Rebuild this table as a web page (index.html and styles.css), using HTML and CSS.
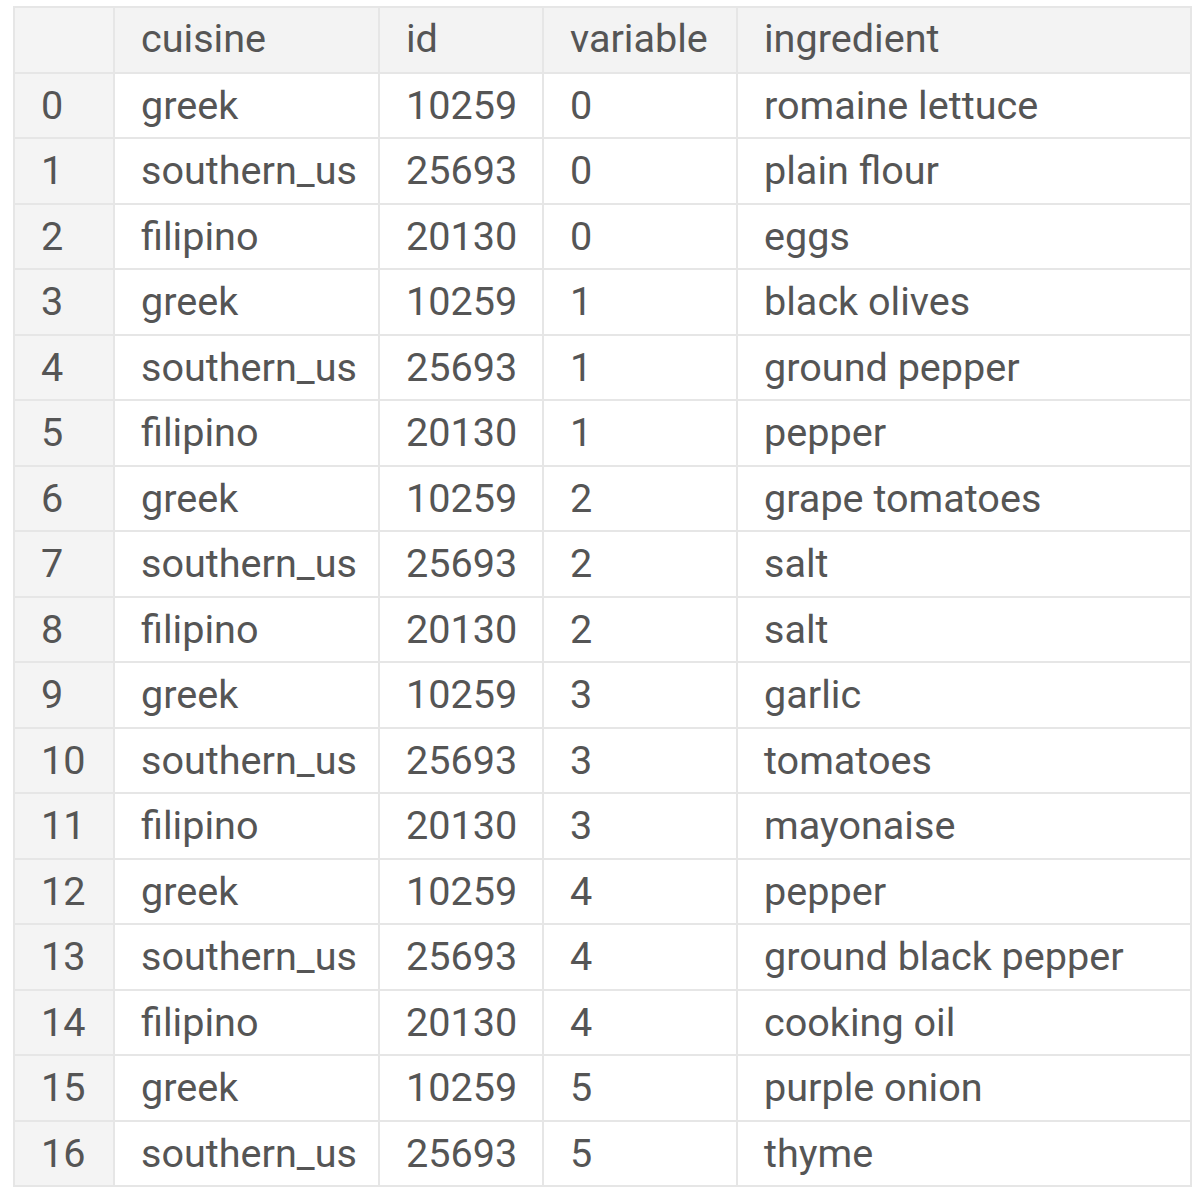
FILE: index.html
```html
<!DOCTYPE html>
<html>
<head>
<meta charset="utf-8">
<link rel="stylesheet" href="styles.css">
</head>
<body>
<table class="df">
  <colgroup>
    <col class="c-idx">
    <col class="c-cuisine">
    <col class="c-id">
    <col class="c-var">
    <col class="c-ing">
  </colgroup>
  <thead>
    <tr><th class="idx"></th><th>cuisine</th><th>id</th><th>variable</th><th>ingredient</th></tr>
  </thead>
  <tbody>
    <tr><td class="idx">0</td><td>greek</td><td>10259</td><td>0</td><td>romaine lettuce</td></tr>
    <tr><td class="idx">1</td><td>southern_us</td><td>25693</td><td>0</td><td>plain flour</td></tr>
    <tr><td class="idx">2</td><td>filipino</td><td>20130</td><td>0</td><td>eggs</td></tr>
    <tr><td class="idx">3</td><td>greek</td><td>10259</td><td>1</td><td>black olives</td></tr>
    <tr><td class="idx">4</td><td>southern_us</td><td>25693</td><td>1</td><td>ground pepper</td></tr>
    <tr><td class="idx">5</td><td>filipino</td><td>20130</td><td>1</td><td>pepper</td></tr>
    <tr><td class="idx">6</td><td>greek</td><td>10259</td><td>2</td><td>grape tomatoes</td></tr>
    <tr><td class="idx">7</td><td>southern_us</td><td>25693</td><td>2</td><td>salt</td></tr>
    <tr><td class="idx">8</td><td>filipino</td><td>20130</td><td>2</td><td>salt</td></tr>
    <tr><td class="idx">9</td><td>greek</td><td>10259</td><td>3</td><td>garlic</td></tr>
    <tr><td class="idx">10</td><td>southern_us</td><td>25693</td><td>3</td><td>tomatoes</td></tr>
    <tr><td class="idx">11</td><td>filipino</td><td>20130</td><td>3</td><td>mayonaise</td></tr>
    <tr><td class="idx">12</td><td>greek</td><td>10259</td><td>4</td><td>pepper</td></tr>
    <tr><td class="idx">13</td><td>southern_us</td><td>25693</td><td>4</td><td>ground black pepper</td></tr>
    <tr><td class="idx">14</td><td>filipino</td><td>20130</td><td>4</td><td>cooking oil</td></tr>
    <tr><td class="idx">15</td><td>greek</td><td>10259</td><td>5</td><td>purple onion</td></tr>
    <tr><td class="idx">16</td><td>southern_us</td><td>25693</td><td>5</td><td>thyme</td></tr>
  </tbody>
</table>
</body>
</html>
```
FILE: styles.css
```css
html, body {
  margin: 0;
  padding: 0;
  background: #ffffff;
}
body {
  padding: 6px 0 0 13px;
}
.df {
  border-collapse: collapse;
  table-layout: fixed;
  width: 1177px;
  font-family: Roboto, "Liberation Sans", sans-serif;
  font-size: 39.6px;
  color: #555555;
  border: 2px solid #e6e6e6;
}
.c-idx { width: 100px; }
.c-cuisine { width: 265px; }
.c-id { width: 164px; }
.c-var { width: 194px; }
.c-ing { width: 454px; }
.df th, .df td {
  border: 2px solid #e6e6e6;
  height: 65.5px;
  padding: 0 0 0 26px;
  text-align: left;
  font-weight: 400;
  white-space: nowrap;
  box-sizing: border-box;
  vertical-align: middle;
}
.df thead th {
  background: #f3f3f3;
  padding-bottom: 2px;
}
.df .idx {
  background: #f4f4f4;
}
```
